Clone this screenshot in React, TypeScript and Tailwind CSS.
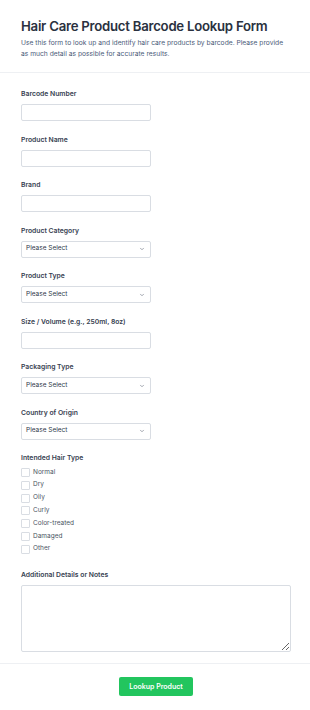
import { ChevronDown } from "lucide-react";

const textFields = ["Barcode Number", "Product Name", "Brand"];

const hairTypes = ["Normal", "Dry", "Oily", "Curly", "Color-treated", "Damaged", "Other"];

function Label({ children }: { children: React.ReactNode }) {
  return <p className="text-[6.8px] leading-[10px] font-semibold text-[#374151] mb-[5px]">{children}</p>;
}

function TextInput({ label }: { label: string }) {
  return (
    <div>
      <Label>{label}</Label>
      <div className="w-[130px] h-[17px] rounded-[2px] border border-[#d9dde3] bg-white" />
    </div>
  );
}

function Select({ label }: { label: string }) {
  return (
    <div>
      <Label>{label}</Label>
      <div className="w-[130px] h-[17px] rounded-[2px] border border-[#d9dde3] bg-white flex items-center justify-between pl-[4px] pr-[5px]">
        <span className="text-[6.5px] text-[#2d3748]">Please Select</span>
        <ChevronDown className="w-[6px] h-[6px] text-[#6b7280]" strokeWidth={2.5} />
      </div>
    </div>
  );
}

export default function App() {
  return (
    <div className="min-h-screen bg-white" style={{ fontFamily: "Inter, 'Noto Sans', sans-serif" }}>
      <div className="px-[21px] pt-[16px] pb-[12px] border-b border-[#eef0f3]">
        <h1 className="text-[13.2px] leading-[20px] font-semibold text-[#2a3140] tracking-[-0.25px] whitespace-nowrap">Hair Care Product Barcode Lookup Form</h1>
        <p className="text-[6.7px] leading-[11px] text-[#4a5a78] mt-[2px]">
          Use this form to look up and identify hair care products by barcode. Please provide as much detail as possible for accurate results.
        </p>
      </div>

      <div className="px-[21px] pt-[16px] pb-[11px] flex flex-col gap-[13.5px] border-b border-[#eef0f3]">
        {textFields.map((f) => (
          <TextInput key={f} label={f} />
        ))}
        <Select label="Product Category" />
        <Select label="Product Type" />
        <TextInput label="Size / Volume (e.g., 250ml, 8oz)" />
        <Select label="Packaging Type" />
        <Select label="Country of Origin" />

        <div>
          <Label>Intended Hair Type</Label>
          <div className="flex flex-col gap-[3.8px]">
            {hairTypes.map((h) => (
              <div key={h} className="flex items-center gap-[3px] h-[9px]">
                <span className="w-[9px] h-[9px] rounded-[1px] border border-[#d9dde3] bg-white" />
                <span className="text-[6.5px] text-[#4b5563]">{h}</span>
              </div>
            ))}
          </div>
        </div>

        <div className="mt-[3px]">
          <Label>Additional Details or Notes</Label>
          <textarea className="block w-[270px] h-[67px] rounded-[2px] border border-[#d9dde3] bg-white resize-y" />
        </div>
      </div>

      <div className="flex justify-center pt-[13px] pb-[16px]">
        <button className="w-[74px] h-[19px] ml-[2px] rounded-[2px] bg-[#22c55e] text-white text-[7px] font-semibold">Lookup Product</button>
      </div>
    </div>
  );
}
